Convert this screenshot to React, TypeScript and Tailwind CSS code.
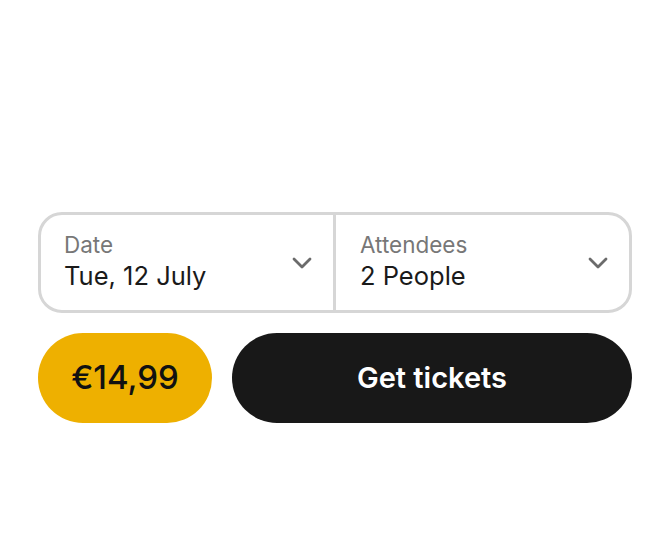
import { ChevronDown } from 'lucide-react';

function Field({ label, value, left }: { label: string; value: string; left?: boolean }) {
  return (
    <div
      className={`flex flex-1 items-center justify-between pr-[15px] ${
        left ? 'pl-[23px]' : 'pl-[24px] border-l-[3px] border-[#d6d6d6]'
      }`}
    >
      <div className="flex flex-col -mt-[2px]">
        <span className="text-[22.5px] leading-[28px] text-[#777777]">{label}</span>
        <span className="text-[25.5px] leading-[33px] text-[#1a1a1a]">{value}</span>
      </div>
      <ChevronDown className="w-[32px] h-[32px] text-[#6b6b6b]" strokeWidth={2.1} />
    </div>
  );
}

export default function App() {
  return (
    <div
      className="min-h-screen bg-white pt-[212px] px-[38px]"
      style={{ fontFamily: 'Inter, "Noto Sans", sans-serif' }}
    >
      <div className="w-[594px] flex flex-col gap-[20px]">
        <div className="flex h-[101px] rounded-[24px] border-[3px] border-[#d6d6d6]">
          <Field label="Date" value="Tue, 12 July" left />
          <Field label="Attendees" value="2 People" />
        </div>
        <div className="flex gap-[20px]">
          <button className="h-[90px] w-[174px] rounded-full bg-[#eeb000] text-[33px] font-medium text-[#111111]">
            €14,99
          </button>
          <button className="h-[90px] flex-1 rounded-full bg-[#181818] text-[29px] font-semibold text-white">
            Get tickets
          </button>
        </div>
      </div>
    </div>
  );
}
